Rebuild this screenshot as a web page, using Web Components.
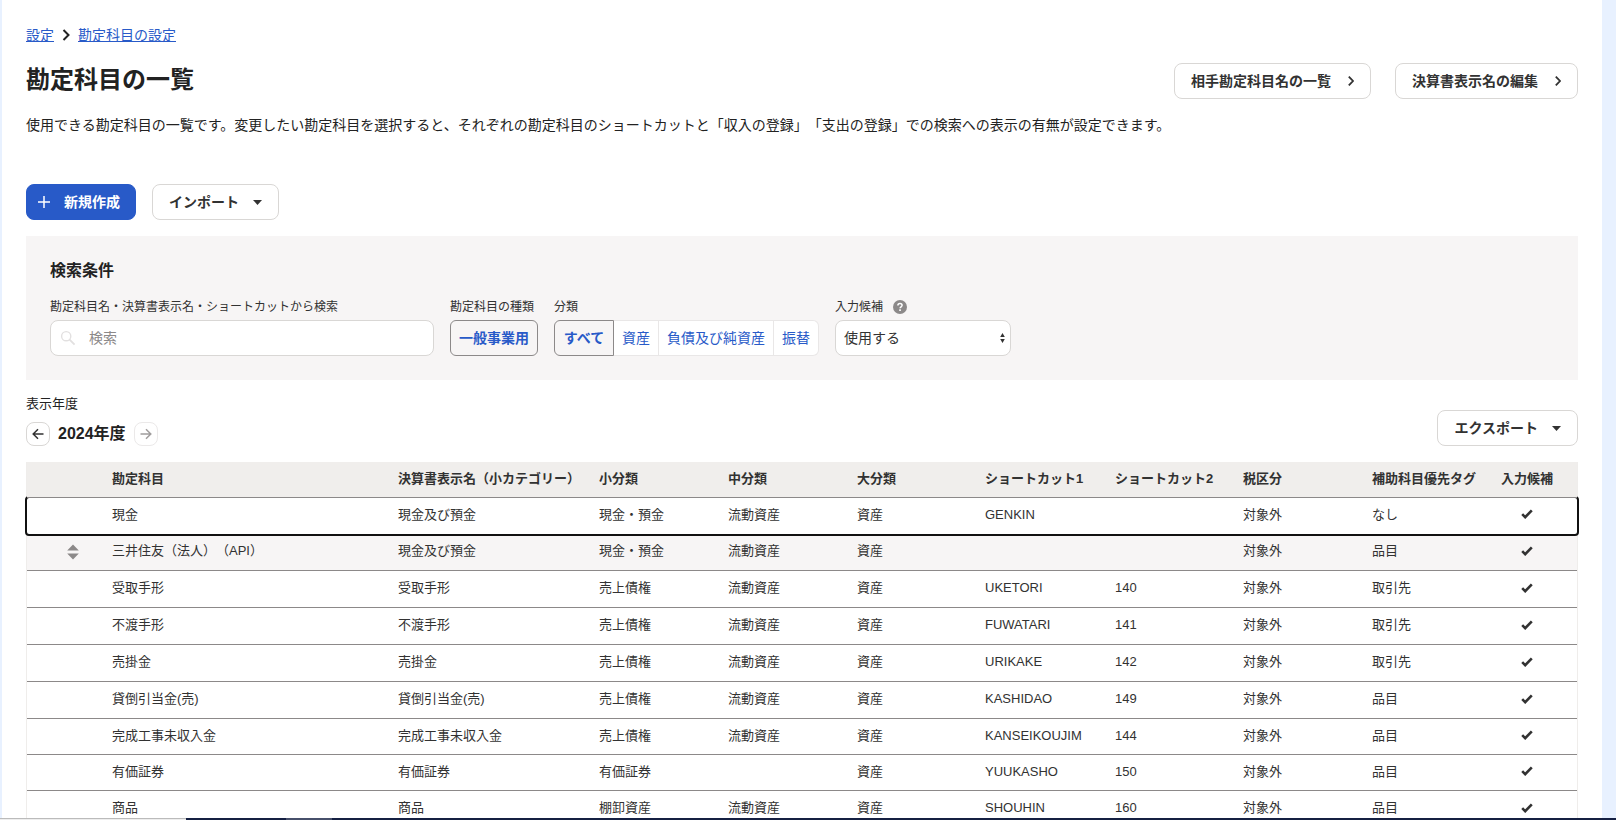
<!DOCTYPE html>
<html lang="ja">
<head>
<meta charset="utf-8">
<title>勘定科目の一覧</title>
<style>
html, body { margin: 0; height: 100%; }
body {
  font-family: "Liberation Sans", "Noto Sans CJK JP", sans-serif;
  font-size: 14px; line-height: 20px; color: #222;
  text-spacing-trim: space-all;
  background: #e8f1ff; overflow: hidden;
}
</style>
</head>
<body>
<account-app></account-app>

<script>
const define = (name, html, setup) => customElements.define(name, class extends HTMLElement {
  constructor() {
    super();
    this.attachShadow({ mode: 'open' }).innerHTML =
      '<style>*{box-sizing:border-box}button,input,select{font:inherit;color:inherit;margin:0}</style>' + html;
  }
  connectedCallback() { if (setup) setup(this, this.shadowRoot); }
});

/* Push button: variants primary / default, optional leading and trailing icon slots */
define('action-button', `
<style>
:host { display: inline-flex; }
button { display: flex; align-items: center; height: 36px; padding: 0 16px; background: #fff;
  border: 1px solid #d9d7d5; border-radius: 8px; font-weight: 700; font-size: 14px; line-height: 20px;
  color: #323232; white-space: nowrap; cursor: pointer; }
:host([primary]) button { background: #285ac8; border-color: #285ac8; color: #fff; padding: 0 15px 0 10px; }
::slotted(svg) { display: block; }
</style>
<button type="button"><slot name="start"></slot><slot></slot><slot name="end"></slot></button>`);

define('crumb-nav', `
<style>
:host { display: block; }
nav { display: flex; align-items: center; }
a { color: #285ac8; text-decoration: underline; }
svg { display: block; margin: 0 8px; }
</style>
<nav aria-label="パンくず">
  <a href="#settings">設定</a>
  <svg width="8" height="12" viewBox="0 0 8 12" fill="none" stroke="#222" stroke-width="2"><path d="M1.5 1l5 5-5 5"/></svg>
  <a href="#accounts">勘定科目の設定</a>
</nav>`);

/* Row of joined toggle buttons; items="a,b,c", first one is pressed */
define('segment-group', `
<style>
:host { display: flex; height: 36px; }
button { height: 36px; padding: 0 8px; background: #fff; color: #285ac8; border: 1px solid #e9e7e7;
  border-left-width: 0; line-height: 20px; white-space: nowrap; cursor: pointer; }
button:first-of-type { border-radius: 6px 0 0 6px; }
button:last-of-type { border-radius: 0 6px 6px 0; }
button:only-of-type { border-radius: 6px; }
button[aria-pressed=true] { background: #f7f5f5; border: 1px solid #8c8989; font-weight: 700; }
button[aria-pressed=true]:not(:only-of-type) { min-width: 60px; }
</style>`, (el, root) => {
  el.getAttribute('items').split(',').forEach((text, i) => {
    const b = document.createElement('button');
    b.type = 'button'; b.textContent = text; b.setAttribute('aria-pressed', i === 0);
    root.append(b);
  });
});

define('search-panel', `
<style>
:host { display: block; background: #f7f5f5; padding: 25px 24px 24px; }
h2 { margin: 0 0 16px; font-size: 16px; line-height: 20px; font-weight: 700; color: #222; }
.fields { display: flex; gap: 16px; align-items: flex-end; }
.field { display: flex; flex-direction: column; gap: 3px; }
.label { display: flex; align-items: center; font-size: 12px; line-height: 20px; color: #323232; white-space: nowrap; }
.label svg { margin-left: 10px; display: block; }
.box { position: relative; display: flex; }
input, select { height: 36px; border: 1px solid #d9d7d5; border-radius: 8px; background: #fff; line-height: 20px; color: #323232; }
input { width: 384px; padding: 0 16px 0 38px; }
input::placeholder { color: #8c8989; opacity: 1; }
.box svg { position: absolute; pointer-events: none; }
.glass { left: 10px; top: 10px; }
select { appearance: none; width: 176px; padding: 0 24px 0 8px; }
.updown { right: 6px; top: 13px; }
</style>
<h2>検索条件</h2>
<div class="fields">
  <div class="field">
    <label class="label" for="q">勘定科目名・決算書表示名・ショートカットから検索</label>
    <div class="box">
      <input id="q" type="text" placeholder="検索">
      <svg class="glass" width="16" height="16" viewBox="0 0 16 16" fill="none" stroke="#e2e0e0" stroke-width="1.4"><circle cx="6.2" cy="6.2" r="4.6"/><path d="M9.6 9.6l5 5" stroke-width="1.8"/></svg>
    </div>
  </div>
  <div class="field">
    <span class="label">勘定科目の種類</span>
    <segment-group items="一般事業用"></segment-group>
  </div>
  <div class="field">
    <span class="label">分類</span>
    <segment-group items="すべて,資産,負債及び純資産,振替"></segment-group>
  </div>
  <div class="field">
    <label class="label" for="cand">入力候補
      <svg width="14" height="14" viewBox="0 0 14 14"><circle cx="7" cy="7" r="7" fill="#8c8989"/><path d="M4.9 5.5c0-1.3 1-2 2.1-2s2.1.7 2.1 1.8c0 1.5-2 1.5-2 3" fill="none" stroke="#fff" stroke-width="1.5"/><rect x="6.2" y="9.3" width="1.7" height="1.7" fill="#fff"/></svg>
    </label>
    <div class="box">
      <select id="cand"><option>使用する</option><option>使用しない</option></select>
      <svg class="updown" width="5" height="10" viewBox="0 0 5 10" fill="#323232"><path d="M2.5 0L4.8 4H.2zM2.5 10L.2 6h4.6z"/></svg>
    </div>
  </div>
</div>`);

define('fiscal-year', `
<style>
:host { display: block; }
.label { font-size: 13px; line-height: 20px; }
.row { display: flex; align-items: center; gap: 8px; margin-top: 8px; }
button { display: flex; align-items: center; justify-content: center; width: 24px; height: 24px; padding: 0;
  background: #fff; border: 1px solid #d9d7d5; border-radius: 8px; color: #323232; }
button:disabled { border-color: #ebe9e9; color: #a09d9d; }
strong { font-size: 16px; line-height: 24px; }
</style>
<div class="label">表示年度</div>
<div class="row">
  <button type="button" aria-label="前年度"><svg width="12" height="12" viewBox="0 0 12 12" fill="none" stroke="currentColor" stroke-width="1.5"><path d="M11.5 6H1.5M6 1.2L1.2 6 6 10.8"/></svg></button>
  <strong>2024年度</strong>
  <button type="button" aria-label="翌年度" disabled><svg width="12" height="12" viewBox="0 0 12 12" fill="none" stroke="currentColor" stroke-width="1.5"><path d="M.5 6h10M6 1.2L10.8 6 6 10.8"/></svg></button>
</div>`);

const COLUMNS = [
  ['', 77], ['勘定科目', 286], ['決算書表示名（小カテゴリー）', 201], ['小分類', 129], ['中分類', 129],
  ['大分類', 128], ['ショートカット1', 130], ['ショートカット2', 128], ['税区分', 129], ['補助科目優先タグ', 129], ['入力候補', 84]
];
const ROWS = [
  ['現金', '現金及び預金', '現金・預金', '流動資産', '資産', 'GENKIN', '', '対象外', 'なし'],
  ['三井住友（法人）（API）', '現金及び預金', '現金・預金', '流動資産', '資産', '', '', '対象外', '品目'],
  ['受取手形', '受取手形', '売上債権', '流動資産', '資産', 'UKETORI', '140', '対象外', '取引先'],
  ['不渡手形', '不渡手形', '売上債権', '流動資産', '資産', 'FUWATARI', '141', '対象外', '取引先'],
  ['売掛金', '売掛金', '売上債権', '流動資産', '資産', 'URIKAKE', '142', '対象外', '取引先'],
  ['貸倒引当金(売)', '貸倒引当金(売)', '売上債権', '流動資産', '資産', 'KASHIDAO', '149', '対象外', '品目'],
  ['完成工事未収入金', '完成工事未収入金', '売上債権', '流動資産', '資産', 'KANSEIKOUJIM', '144', '対象外', '品目'],
  ['有価証券', '有価証券', '有価証券', '', '資産', 'YUUKASHO', '150', '対象外', '品目'],
  ['商品', '商品', '棚卸資産', '流動資産', '資産', 'SHOUHIN', '160', '対象外', '品目']
];
const ROW_CLASS = { 0: 'focused short', 1: 'hover', 6: 'short', 7: 'short' };
const CHECK = '<svg width="12" height="10" viewBox="0 0 12 10" fill="none" stroke="#323232" stroke-width="2.6" role="img" aria-label="使用する"><path d="M1.2 5.2l3 3L10.8 1.4"/></svg>';
const SORT = '<svg width="12" height="16" viewBox="0 0 12 16" fill="#8c8989"><path d="M6 .5L11.8 6.5H.2zM6 15.5L.2 9.5h11.6z"/></svg>';

define('account-table', `
<style>
:host { display: block; }
table { width: 100%; table-layout: fixed; border-collapse: separate; border-spacing: 0; font-size: 13px; line-height: 20px;
  color: #323232; border: solid #efedeb; border-width: 0 1px; }
th, td { padding: 0 0 2px 8px; text-align: left; white-space: nowrap; border-bottom: 1px solid #8c8989; vertical-align: middle; }
thead th { position: relative; z-index: 1; height: 36px; padding-bottom: 2px; background: #f0eeec; font-weight: 700; }
td { height: 37px; }
.short td { height: 36px; }
td:first-child { text-align: center; padding: 0 0 2px 14px; }
td:last-child { padding: 0 16px 4px 0; text-align: center; }
td svg { display: inline-block; vertical-align: middle; }
.hover td { background: #f7f5f5; }
.focused { outline: 2px solid #111; border-radius: 2px; }
.focused td { border-bottom-color: #fff; }
</style>
<table><colgroup></colgroup><thead><tr></tr></thead><tbody></tbody></table>`, (el, root) => {
  root.querySelector('colgroup').innerHTML = COLUMNS.map(c => `<col style="width:${c[1]}px">`).join('');
  root.querySelector('thead tr').innerHTML = COLUMNS.map(c => `<th scope="col">${c[0]}</th>`).join('');
  root.querySelector('tbody').innerHTML = ROWS.map((r, i) =>
    `<tr class="${ROW_CLASS[i] || ''}"><td>${i === 1 ? SORT : ''}</td>${r.map(t => `<td>${t}</td>`).join('')}<td>${CHECK}</td></tr>`).join('');
});

/* Thin strip of the desktop visible under the page */
define('desktop-edge', `
<style>
:host { display: flex; height: 2px; background: #152042; }
.status { width: 186px; background: #eee; border-top: 1px solid #bbb; }
.task { width: 46px; margin-left: 100px; background: #47506b; }
</style>
<div class="status"></div><div class="task"></div>`);

define('account-app', `
<style>
:host { display: flex; flex-direction: column; height: 100vh; }
main { flex: 1; min-height: 0; overflow: hidden; margin: 0 14px 0 2px; padding: 25px 24px 0; background: #fff; }
.head { display: flex; justify-content: space-between; margin-top: 18px; }
h1 { margin: 0; padding-top: 1px; font-size: 24px; line-height: 32px; font-weight: 700; }
.links { display: flex; gap: 24px; }
p { margin: 16px 0 0; line-height: 20px; }
.tools { display: flex; gap: 16px; margin: 49px 0 16px; }
.year { display: flex; justify-content: space-between; align-items: flex-end; margin: 14px 0 16px; }
.chev { margin: 0 0 0 17px; }
.caret { margin-left: 14px; }
.plus { margin-right: 13px; }
</style>
<main>
  <crumb-nav></crumb-nav>
  <div class="head">
    <h1>勘定科目の一覧</h1>
    <div class="links">
      <action-button>相手勘定科目名の一覧<svg slot="end" class="chev" width="6" height="10" viewBox="0 0 6 10" fill="none" stroke="#323232" stroke-width="1.8"><path d="M.8 .6L5 5 .8 9.4"/></svg></action-button>
      <action-button>決算書表示名の編集<svg slot="end" class="chev" width="6" height="10" viewBox="0 0 6 10" fill="none" stroke="#323232" stroke-width="1.8"><path d="M.8 .6L5 5 .8 9.4"/></svg></action-button>
    </div>
  </div>
  <p>使用できる勘定科目の一覧です。変更したい勘定科目を選択すると、それぞれの勘定科目のショートカットと「収入の登録」「支出の登録」での検索への表示の有無が設定できます。</p>
  <div class="tools">
    <action-button primary><svg slot="start" class="plus" width="14" height="14" viewBox="0 0 14 14" fill="none" stroke="#fff" stroke-width="1.5"><path d="M7 1v12M1 7h12"/></svg>新規作成</action-button>
    <action-button>インポート<svg slot="end" class="caret" width="9" height="5" viewBox="0 0 9 5" fill="#323232"><path d="M0 0h9L4.5 5z"/></svg></action-button>
  </div>
  <search-panel></search-panel>
  <div class="year">
    <fiscal-year></fiscal-year>
    <action-button>エクスポート<svg slot="end" class="caret" width="9" height="5" viewBox="0 0 9 5" fill="#323232"><path d="M0 0h9L4.5 5z"/></svg></action-button>
  </div>
  <account-table></account-table>
</main>
<desktop-edge></desktop-edge>`);
</script>
</body>
</html>
